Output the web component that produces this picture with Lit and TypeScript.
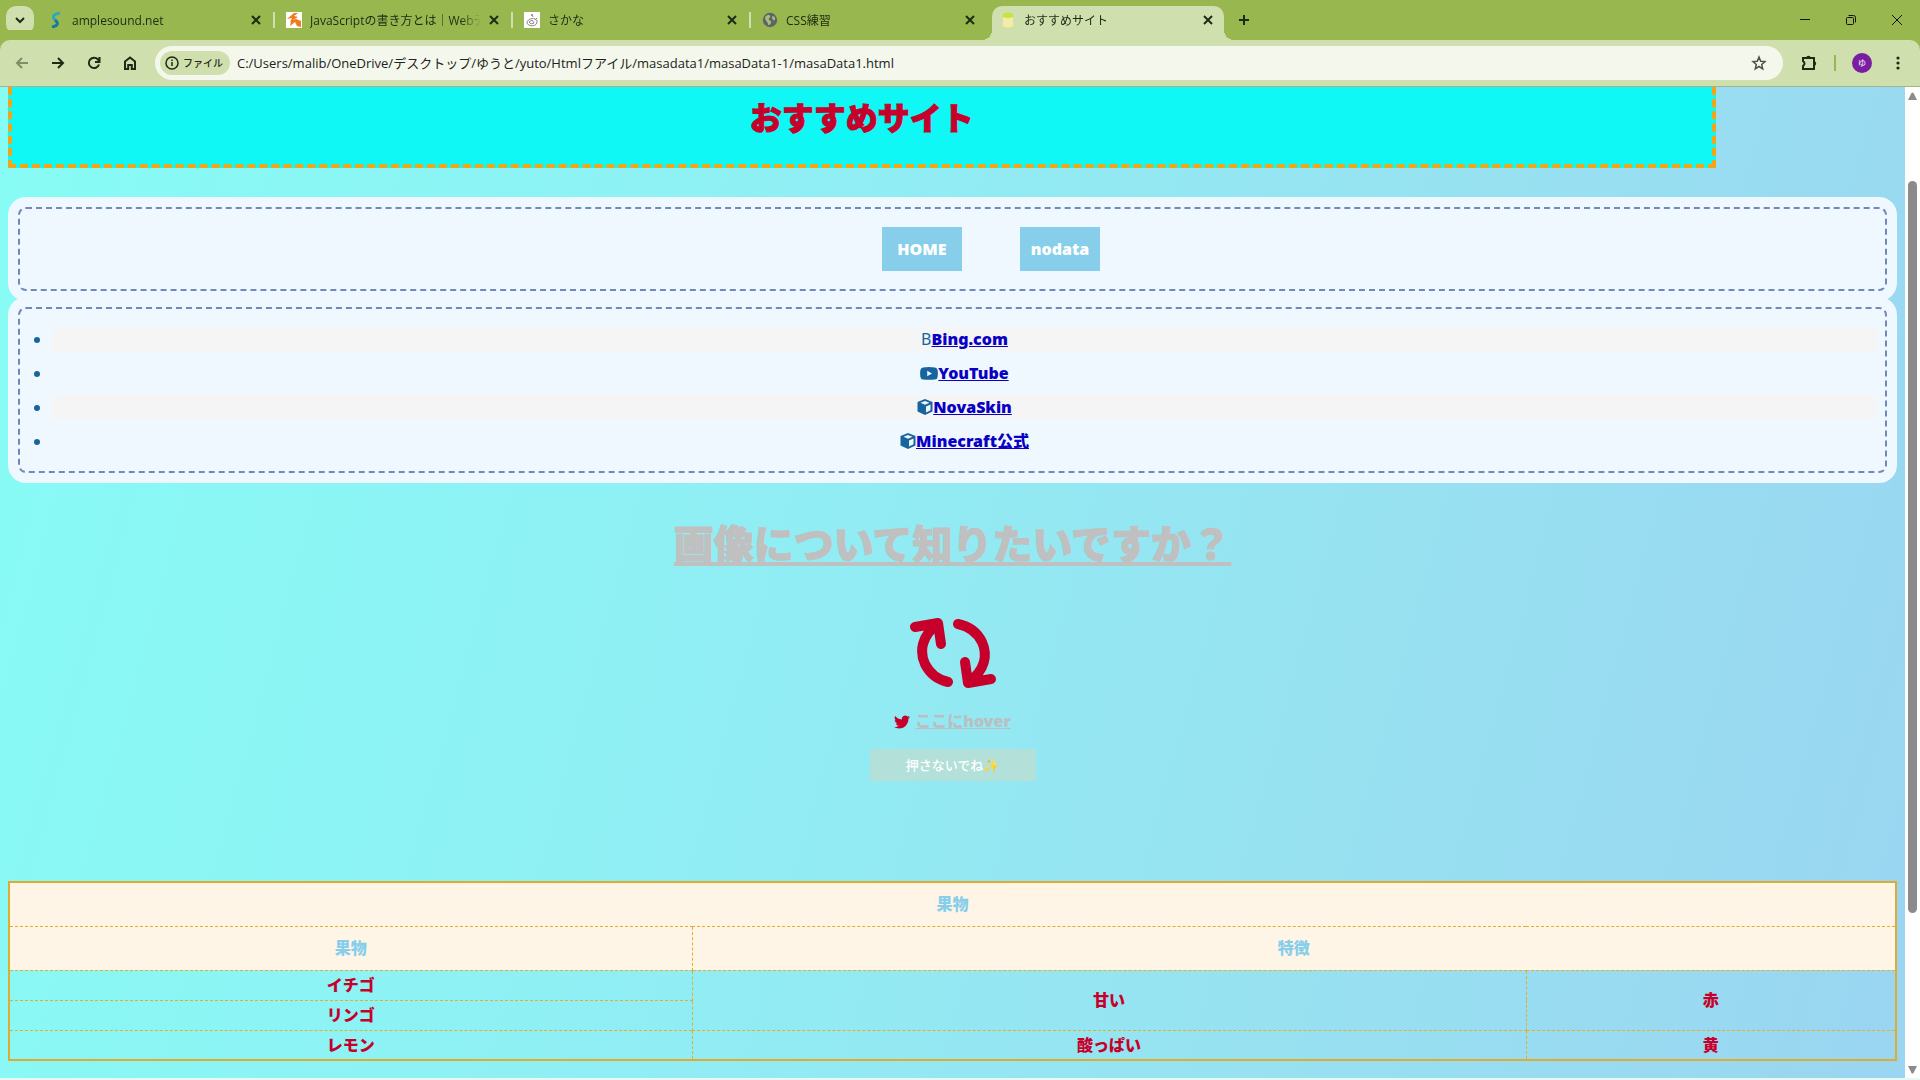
import { LitElement, html, svg, css } from "lit";
import { customElement } from "lit/decorators.js";

interface Tab { title: string; icon: string; active?: boolean; sep?: boolean; }

const TABS: Tab[] = [
  { title: "amplesound.net", icon: "wave", sep: true },
  { title: "JavaScriptの書き方とは｜Webデザ", icon: "orange", sep: true },
  { title: "さかな", icon: "fish", sep: true },
  { title: "CSS練習", icon: "globe" },
  { title: "おすすめサイト", icon: "juice", active: true },
];

const FAVICONS: Record<string, unknown> = {
  wave: svg`<path d="M12 1C5 2 4 5 7 8" fill="none" stroke="#2ba9bd" stroke-width="3"/><path d="M7 8c4 3 3 6-3 7" fill="none" stroke="#1878a0" stroke-width="3"/>`,
  orange: svg`<path d="M0 0h16v16H0z" fill="#fff"/><path d="M1 7 8 1h4L8 4l4 1-8 5 2-4zM5 9l5-2 5 2v6l-4-1-2-4-5 4z" fill="#f07a1c"/>`,
  fish: svg`<path d="M0 0h16v16H0z" fill="#fff"/><path d="M7 4 8 2l1 3M3 11c0-5 9-6 10-2 1 6-9 6-10 2zM5 10l3-2 2 3-3 1zM11 8l2-2" fill="none" stroke="#888"/>`,
  globe: svg`<circle cx="8" cy="8" r="7.2" fill="#5f6368"/><path d="M3 5c3-3 6-2 5 0S6 7 7 8s3 1 2 3-3 3-3 1-3-3-3-7zM10 4l3 1v3c-2 1-3-1-3-4z" fill="#a7bd76"/>`,
  juice: svg`<path d="M3 3h10v11q-5 3-10 0z" fill="#f3eca4"/><path d="M3 2q5-3 10 0v3q-5 2-10 0z" fill="#c9e23f"/>`,
};

const cube = html`<svg class="glyph cube" viewBox="0 0 16 16" aria-hidden="true"><path fill-rule="evenodd" d="M8 0 15.500 3V12.500L8 16 .5 12.500V3zM8 2 3.500 3.800 8 5.700l4.500-1.900zM9 7.400v6l4.500-2.100V5.500z"/></svg>`;
const LINKS = [
  { text: "Bing.com", icon: html`<span class="letter">B</span>` },
  { text: "YouTube", icon: html`<svg class="glyph tube" viewBox="0 0 18 13" aria-hidden="true"><path fill-rule="evenodd" d="M3 .5Q9-.3 15 .5 17.500.8 17.700 3.500 18 6.500 17.700 9.500 17.500 12.200 15 12.500 9 13.200 3 12.500.500 12.200.300 9.500 0 6.500.300 3.500.500.8 3 .5zM7.200 3.800v5.400L12 6.500z"/></svg>` },
  { text: "NovaSkin", icon: cube },
  { text: "Minecraft公式", icon: cube },
];

@customElement("app-root")
export class AppRoot extends LitElement {
  static styles = css`
    :host {
      display: flex; flex-direction: column; min-height: 100vh; background: #e8f8f4;
      font-family: "Open Sans", "Noto Sans CJK JP", sans-serif; color: #1f2a14;
    }
    * { box-sizing: border-box; }
    button { font: inherit; border: 0; background: none; padding: 0; color: inherit; }
    button svg { display: block; }
    .line { fill: none; stroke: currentColor; stroke-width: 2; }
    .strip { display: flex; align-items: center; height: 40px; padding: 0 15px 0 6px; background: #98b84f; }
    .pick { display: grid; place-items: center; width: 28px; height: 28px; border-radius: 10px; background: #cfe0ae; margin-right: 4px; }
    .tabs { display: flex; align-self: stretch; }
    .tab { position: relative; display: flex; align-items: center; gap: 8px; width: 238px; padding: 0 15px 0 10px; font-size: 12px; }
    .tab.sep::after { content: ""; position: absolute; right: 1px; top: 12px; width: 2px; height: 16px; background: #cfe0ae; }
    .tab.active { width: 232px; margin: 6px 0 0 2px; padding: 0 11px 6px 8px; border-radius: 10px 10px 0 0; background: #cfe0ae; }
    .tab.active::before, .tab.active::after { content: ""; position: absolute; bottom: 0; width: 10px; height: 10px; }
    .tab.active::before { left: -10px; background: radial-gradient(circle at 0 0, transparent 10px, #cfe0ae 10px); }
    .tab.active::after { right: -10px; background: radial-gradient(circle at 100% 0, transparent 10px, #cfe0ae 10px); }
    .fav { width: 16px; height: 16px; flex: none; }
    .name { flex: 1; min-width: 0; overflow: hidden; white-space: nowrap; mask-image: linear-gradient(90deg, #000 88%, transparent); }
    .plus { margin-left: 14px; }
    .win { display: flex; gap: 30px; margin-left: auto; color: #111; }

    .bar { display: flex; align-items: center; gap: 17px; height: 47px; padding: 0 14px 1px; border-bottom: 1px solid #a3b48a; border-radius: 10px 10px 0 0; background: #cfe0ae; box-shadow: 0 -10px 0 0 #98b84f; }
    .moves { display: flex; gap: 20px; }
    .back { opacity: .45; }
    .omni { display: flex; align-items: center; flex: 1; height: 34px; padding: 0 15px 0 5px; border-radius: 17px; background: #f4f8ec; }
    .chip { display: flex; align-items: center; gap: 3px; height: 24px; padding: 0 7px 0 4px; border-radius: 12px; background: #cfe0ae; font-size: 10px; font-weight: 500; }
    .url { flex: 1; min-width: 0; margin-left: 7px; padding: 0; border: 0; background: none; font: 13px/20px "Open Sans", "Noto Sans CJK JP", sans-serif; color: #222; }
    .tools { display: flex; align-items: center; gap: 16px; }
    .rule { width: 2px; height: 16px; background: #98b84f; }
    .me { width: 20px; height: 20px; margin-right: 2px; border-radius: 50%; background: #7a1ea1; color: #fff; font-size: 8px; line-height: 20px; text-align: center; }

    .view { display: flex; flex: 1; margin-bottom: 2px; }
    .page {
      flex: 1; min-width: 0; padding: 0 8px 16px; color: #c7002b; font-weight: 900; font-size: 16px; line-height: 24px; text-align: center;
      font-family: "Noto Sans", "Noto Sans CJK JP", sans-serif;
      background: linear-gradient(105deg, #87fcf5 0%, #8ff0f4 36%, #97e2f1 68%, #9ad5f1 100%);
    }
    .hero { width: 90.4%; height: 81px; padding-top: 7px; border: 4px dashed #f2a516; border-top: 0; background: #10f8f5; }
    .hero h1 { margin: 0; font-size: 32px; line-height: 48px; font-weight: 900; -webkit-text-stroke: 1px; stroke-linejoin: round; }
    .box { margin: 0 10px; border: 2px dashed #7089bd; border-radius: 8px; background: #f0f8ff; box-shadow: 0 0 0 10px #f0f8ff; list-style-position: outside; color: #17659f; }
    .nav { display: flex; justify-content: center; gap: 58px; margin-top: 39px; padding: 18px 8px 18px 85px; }
    .nav a { width: 80px; background: #87ceeb; color: #fff; line-height: 44px; text-decoration: none; }
    .links { display: flex; flex-direction: column; gap: 10px; margin-top: 16px; padding: 18px 8px 18px 32px; }
    .links li { display: list-item; }
    .links li:nth-child(odd) { background: #f5f5f5; }
    .links a { color: #0a00c4; }
    .glyph { fill: #17659f; vertical-align: -2px; }
    .cube { width: 16px; height: 16px; }
    .tube { width: 18px; height: 13px; vertical-align: -1px; }
    .letter { font-weight: 400; }
    .ask { margin: 41px 0 0; color: #c0c0c0; font-size: 40px; line-height: 60px; font-weight: 900; -webkit-text-stroke: 1px; text-decoration: underline 4px; text-underline-offset: 3px; text-decoration-skip-ink: none; }
    .sync { display: block; width: 88px; height: 72px; margin: 43px auto 0; }
    .hover { margin: 20px 0 0; }
    .hover svg { width: 16px; height: 16px; vertical-align: -3px; fill: #c7002b; margin-right: 1px; }
    .hover a { color: #b9bfc2; text-decoration-skip-ink: none; }
    .press { display: block; width: 166px; height: 32px; margin: 16px auto 0; border-radius: 2px; background: #b4e0da; color: #fff; font-size: 13px; font-weight: 500; }
    .fruit { width: 100%; margin-top: 100px; border-collapse: collapse; border: 2px solid #deac31; table-layout: fixed; }
    .fruit th, .fruit td { border: 1px dashed #e0b02c; padding: 0; height: 30px; line-height: 24px; }
    .fruit thead th { height: 44px; background: #fff5e6; color: #87ceeb; font-weight: 900; }

    .scroll { display: flex; flex-direction: column; align-items: center; width: 15px; padding: 5px 0 4px; background: #fff; }
    .thumb { width: 9px; margin: 81px 0 0; flex: 0 0 732px; border-radius: 5px; background: #8b8b8b; }
    .scroll svg { fill: #8b8b8b; width: 9px; height: 8px; }
    .down { margin-top: auto; }
  `;

  private close(size = 10) {
    return html`<svg width=${size} height=${size} viewBox="0 0 10 10"><path class="line" d="M1 1l8 8M9 1L1 9"/></svg>`;
  }

  private tab(t: Tab) {
    return html`<div class="tab ${t.active ? "active" : ""} ${t.sep ? "sep" : ""}">
      <svg class="fav" viewBox="0 0 16 16" aria-hidden="true">${FAVICONS[t.icon]}</svg>
      <span class="name">${t.title}</span>
      <button aria-label="閉じる">${this.close()}</button>
    </div>`;
  }

  render() {
    return html`
      <div class="strip">
        <button class="pick" aria-label="タブを検索"><svg width="10" height="8" viewBox="0 0 10 8"><path class="line" d="M1 2l4 4 4-4"/></svg></button>
        <div class="tabs">${TABS.map((t) => this.tab(t))}</div>
        <button class="plus" aria-label="新しいタブ"><svg width="12" height="12" viewBox="0 0 12 12"><path class="line" d="M6 1v10M1 6h10"/></svg></button>
        <div class="win">
          <button aria-label="最小化"><svg width="16" height="16" viewBox="0 0 16 16"><path d="M3 7.500h10" stroke="currentColor"/></svg></button>
          <button aria-label="元に戻す"><svg width="16" height="16" viewBox="0 0 16 16" fill="none" stroke="currentColor"><rect x="3.500" y="5.500" width="7" height="7" rx="1"/><path d="M5.500 3.500h5q2 0 2 2v5"/></svg></button>
          <button aria-label="閉じる"><svg width="16" height="16" viewBox="0 0 16 16"><path d="M3 3l10 10M13 3L3 13" stroke="currentColor"/></svg></button>
        </div>
      </div>
      <div class="bar">
        <div class="moves">
          <button class="back" aria-label="戻る"><svg width="16" height="16" viewBox="0 0 16 16"><path class="line" d="M14 8H3M8 3L3 8l5 5"/></svg></button>
          <button aria-label="進む"><svg width="16" height="16" viewBox="0 0 16 16"><path class="line" d="M2 8h11M8 3l5 5-5 5"/></svg></button>
          <button aria-label="再読み込み"><svg width="16" height="16" viewBox="0 0 16 16"><path class="line" d="M13 9.500A5.200 5.200 0 1 1 12 4.500L13.500 6M13.500 2v5H9"/></svg></button>
          <button aria-label="ホーム"><svg width="16" height="16" viewBox="0 0 16 16"><path class="line" d="M3 6.500 8 2.500l5 4V14H9.800v-4H6.200v4H3z" stroke-width="1.800"/></svg></button>
        </div>
        <div class="omni">
          <button class="chip"><svg width="16" height="16" viewBox="0 0 16 16"><circle cx="8" cy="8" r="6" fill="none" stroke="currentColor" stroke-width="1.500"/><path d="M8 7v4M8 4.500V6" stroke="currentColor" stroke-width="1.500"/></svg>ファイル</button>
          <input class="url" aria-label="アドレス" value="C:/Users/malib/OneDrive/デスクトップ/ゆうと/yuto/Htmlフアイル/masadata1/masaData1-1/masaData1.html" />
          <button aria-label="ブックマーク"><svg width="18" height="18" viewBox="0 0 18 18"><path d="M9 3l1.700 4.200 4.300.4-3.300 2.900 1 4.300L9 12.500l-3.700 2.300 1-4.300L3 7.600l4.300-.4z" fill="none" stroke="#4c5244" stroke-width="1.500"/></svg></button>
        </div>
        <div class="tools">
          <button aria-label="拡張機能"><svg width="18" height="18" viewBox="0 0 18 18"><path class="line" d="M3 4h11v11H3v-3q3-2.500 0-5z"/><path d="M6.300 4a2.200 2.200 0 0 1 4.400 0zM14 7.300a2.200 2.200 0 0 1 0 4.400z" fill="currentColor"/></svg></button>
          <span class="rule"></span>
          <button class="me" aria-label="プロフィール">ゆ</button>
          <button aria-label="メニュー"><svg width="16" height="16" viewBox="0 0 16 16" fill="currentColor"><circle cx="8" cy="3" r="1.600"/><circle cx="8" cy="8" r="1.600"/><circle cx="8" cy="13" r="1.600"/></svg></button>
        </div>
      </div>
      <div class="view">
        <main class="page">
          <header class="hero"><h1>おすすめサイト</h1></header>
          <nav class="box nav"><a href="#home">HOME</a><a href="#nodata">nodata</a></nav>
          <ul class="box links">${LINKS.map((l) => html`<li>${l.icon}<a href="#link">${l.text}</a></li>`)}</ul>
          <h2 class="ask">画像について知りたいですか？</h2>
          <svg class="sync" viewBox="0 0 88 72" fill="none" stroke="#c7002b" stroke-width="10" stroke-linecap="round" stroke-linejoin="round" aria-hidden="true">
            <path d="M6 10 29 6 32 27M28 7C13 19 10 34 16 47 21 57 30 63 39 65"/><path d="M49 7C59 9 68 15 73 25 79 38 76 53 60 65M56 45 59 66 82 62"/>
          </svg>
          <p class="hover"><svg viewBox="0 0 24 24" aria-hidden="true"><path d="M23.950 4.570a10 10 0 0 1-2.820.77 4.960 4.960 0 0 0 2.160-2.720c-.95.550-2 .95-3.130 1.180a4.920 4.920 0 0 0-8.380 4.480C7.690 8.100 4.070 6.130 1.640 3.160a4.820 4.820 0 0 0-.67 2.480c0 1.710.87 3.210 2.190 4.100a4.900 4.900 0 0 1-2.230-.62v.06a4.920 4.920 0 0 0 3.950 4.830 5 5 0 0 1-2.210.080 4.940 4.940 0 0 0 4.600 3.420A9.870 9.870 0 0 1 0 19.540a13.990 13.990 0 0 0 7.560 2.210c9.050 0 14-7.500 14-13.980 0-.21 0-.42-.02-.63a9.940 9.940 0 0 0 2.410-2.570z"/></svg> <a href="#hover">ここにhover</a></p>
          <button class="press">押さないでね✨</button>
          <table class="fruit">
            <colgroup><col style="width:36.2%"><col style="width:44.2%"><col style="width:19.6%"></colgroup>
            <thead>
              <tr><th colspan="3">果物</th></tr>
              <tr><th>果物</th><th colspan="2">特徴</th></tr>
            </thead>
            <tbody>
              <tr><td>イチゴ</td><td rowspan="2">甘い</td><td rowspan="2">赤</td></tr>
              <tr><td>リンゴ</td></tr>
              <tr><td>レモン</td><td>酸っぱい</td><td>黄</td></tr>
            </tbody>
          </table>
        </main>
        <div class="scroll" aria-hidden="true">
          <svg viewBox="0 0 9 8"><path d="M3.500 1Q4.500 0 5.500 1L9 8H0z"/></svg>
          <div class="thumb"></div>
          <svg class="down" viewBox="0 0 9 8"><path d="M0 0h9L5.500 7Q4.500 8 3.500 7z"/></svg>
        </div>
      </div>`;
  }
}
